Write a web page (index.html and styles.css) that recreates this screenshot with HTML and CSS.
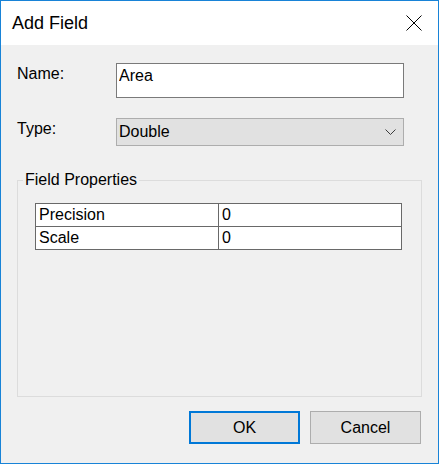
FILE: index.html
```html
<!DOCTYPE html>
<html lang="en">
<head>
<meta charset="utf-8">
<title>Add Field</title>
<link rel="stylesheet" href="styles.css">
</head>
<body>
<div class="window">
  <header class="titlebar">
    <span class="title">Add Field</span>
    <svg class="close" width="16" height="16" viewBox="0 0 16 16" aria-label="Close">
      <path d="M0.5 0.5 L15.5 15.5 M15.5 0.5 L0.5 15.5" stroke="#000" stroke-width="1" fill="none"/>
    </svg>
  </header>
  <div class="content">
    <div class="form">
      <label class="label" for="name">Name:</label>
      <input id="name" class="textbox" type="text" value="Area">
      <span class="label">Type:</span>
      <div class="combo">
        <span class="combo-value">Double</span>
        <svg class="chevron" width="11" height="6" viewBox="0 0 11 6">
          <polyline points="0.5,0.5 5.5,5.5 10.5,0.5" stroke="#3c3c3c" stroke-width="1" fill="none"/>
        </svg>
      </div>
    </div>
    <fieldset class="group">
      <legend class="group-title">Field Properties</legend>
      <table class="props">
        <colgroup><col class="col-name"><col class="col-value"></colgroup>
        <tr><td>Precision</td><td>0</td></tr>
        <tr><td>Scale</td><td>0</td></tr>
      </table>
    </fieldset>
    <div class="buttons">
      <button class="btn btn-default" type="button">OK</button>
      <button class="btn" type="button">Cancel</button>
    </div>
  </div>
</div>
</body>
</html>
```
FILE: styles.css
```css
html, body {
  margin: 0;
  padding: 0;
}
body {
  font-family: "Liberation Sans", Arial, sans-serif;
  font-size: 16px;
  line-height: 18px;
  color: #000;
  background: #fff;
}
.window {
  width: 439px;
  height: 464px;
  box-sizing: border-box;
  border: 1px solid #1883d7;
  background: #f0f0f0;
  display: flex;
  flex-direction: column;
}
.titlebar {
  flex: none;
  height: 44px;
  background: #fff;
  display: flex;
  align-items: center;
  justify-content: space-between;
  padding: 0 16px 0 11px;
}
.title {
  font-size: 18px;
  line-height: 20px;
}
.close {
  display: block;
}
.content {
  flex: 1;
  display: flex;
  flex-direction: column;
  padding: 18px 16px 19px 16px;
  min-height: 0;
}
.form {
  display: grid;
  grid-template-columns: 99px 288px;
  grid-template-rows: 35px 28px;
  row-gap: 20px;
}
.label {
  padding-top: 2px;
}
.textbox {
  box-sizing: border-box;
  width: 288px;
  height: 35px;
  margin: 0;
  border: 1px solid #7a7a7a;
  background: #fff;
  padding: 3px 2px 12px;
  font: inherit;
  color: #000;
  outline: none;
}
.combo {
  box-sizing: border-box;
  height: 28px;
  border: 1px solid #adadad;
  background: #e1e1e1;
  display: flex;
  align-items: center;
  justify-content: space-between;
  padding: 0 7px 0 2px;
}
.chevron {
  display: block;
}
.group {
  flex: 1;
  min-width: 0;
  margin: 25px 0 0;
  padding: 14px 0 0 5px;
  border: 1px solid #dcdcdc;
}
.group-title {
  padding: 0 2px;
  line-height: 18px;
}
.props {
  border-collapse: collapse;
  table-layout: fixed;
  margin-left: 12px;
  width: 367px;
}
.col-name {
  width: 183px;
}
.props td {
  border: 1px solid #696969;
  background: #fff;
  height: 22px;
  padding: 0 3px;
  white-space: nowrap;
}
.buttons {
  flex: none;
  display: flex;
  justify-content: flex-end;
  gap: 10px;
  margin-top: 14px;
  padding-right: 1px;
}
.btn {
  box-sizing: border-box;
  width: 111px;
  height: 33px;
  margin: 0;
  padding: 0;
  background: #e1e1e1;
  border: 1px solid #adadad;
  font: inherit;
  color: #000;
}
.btn-default {
  border: 2px solid #0078d7;
}
```
